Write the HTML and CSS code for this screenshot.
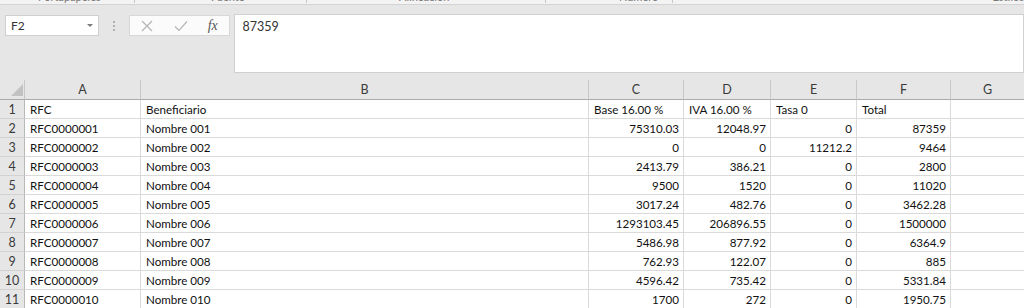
FILE: index.html
```html
<!DOCTYPE html>
<html lang="es">
<head>
<meta charset="utf-8">
<title>Hoja</title>
<link rel="stylesheet" href="styles.css">
</head>
<body>
<div class="ribbon">
  <div class="ribbon-labels">
    <span class="rl rl-1">Portapapeles</span><span class="sep"></span>
    <span class="rl rl-2">Fuente</span><span class="sep"></span>
    <span class="rl rl-3">Alineación</span><span class="sep"></span>
    <span class="rl rl-4">Número</span><span class="sep"></span>
    <span class="rl rl-5">Estilos</span>
  </div>
</div>
<div class="fbar">
  <div class="namebox"><span>F2</span><span class="caret"></span></div>
  <div class="grip"><i></i><i></i><i></i></div>
  <div class="fbtns">
    <svg class="ico" width="12" height="12" viewBox="0 0 12 12"><path d="M1 1L11 11M11 1L1 11" stroke="#b4b4b4" stroke-width="1.2" fill="none"/></svg>
    <svg class="ico" width="14" height="12" viewBox="0 0 14 12"><path d="M1 6.5L5 10.5L13 1.5" stroke="#b4b4b4" stroke-width="1.2" fill="none"/></svg>
    <span class="fx">fx</span>
  </div>
  <div class="finput">87359</div>
</div>
<div class="sheet">
  <div class="corner"><span class="tri"></span></div>
  <div class="ch">A</div><div class="ch">B</div><div class="ch">C</div><div class="ch">D</div><div class="ch">E</div><div class="ch">F</div><div class="ch">G</div>

  <div class="rh">1</div><div class="c">RFC</div><div class="c">Beneficiario</div><div class="c">Base 16.00 %</div><div class="c">IVA 16.00 %</div><div class="c">Tasa 0</div><div class="c">Total</div><div class="c"></div>
  <div class="rh">2</div><div class="c">RFC0000001</div><div class="c">Nombre 001</div><div class="c n">75310.03</div><div class="c n">12048.97</div><div class="c n">0</div><div class="c n">87359</div><div class="c"></div>
  <div class="rh">3</div><div class="c">RFC0000002</div><div class="c">Nombre 002</div><div class="c n">0</div><div class="c n">0</div><div class="c n">11212.2</div><div class="c n">9464</div><div class="c"></div>
  <div class="rh">4</div><div class="c">RFC0000003</div><div class="c">Nombre 003</div><div class="c n">2413.79</div><div class="c n">386.21</div><div class="c n">0</div><div class="c n">2800</div><div class="c"></div>
  <div class="rh">5</div><div class="c">RFC0000004</div><div class="c">Nombre 004</div><div class="c n">9500</div><div class="c n">1520</div><div class="c n">0</div><div class="c n">11020</div><div class="c"></div>
  <div class="rh">6</div><div class="c">RFC0000005</div><div class="c">Nombre 005</div><div class="c n">3017.24</div><div class="c n">482.76</div><div class="c n">0</div><div class="c n">3462.28</div><div class="c"></div>
  <div class="rh">7</div><div class="c">RFC0000006</div><div class="c">Nombre 006</div><div class="c n">1293103.45</div><div class="c n">206896.55</div><div class="c n">0</div><div class="c n">1500000</div><div class="c"></div>
  <div class="rh">8</div><div class="c">RFC0000007</div><div class="c">Nombre 007</div><div class="c n">5486.98</div><div class="c n">877.92</div><div class="c n">0</div><div class="c n">6364.9</div><div class="c"></div>
  <div class="rh">9</div><div class="c">RFC0000008</div><div class="c">Nombre 008</div><div class="c n">762.93</div><div class="c n">122.07</div><div class="c n">0</div><div class="c n">885</div><div class="c"></div>
  <div class="rh">10</div><div class="c">RFC0000009</div><div class="c">Nombre 009</div><div class="c n">4596.42</div><div class="c n">735.42</div><div class="c n">0</div><div class="c n">5331.84</div><div class="c"></div>
  <div class="rh">11</div><div class="c">RFC0000010</div><div class="c">Nombre 010</div><div class="c n">1700</div><div class="c n">272</div><div class="c n">0</div><div class="c n">1950.75</div><div class="c"></div>
</div>
</body>
</html>
```

FILE: styles.css
```css
* { box-sizing: border-box; }
html, body { margin: 0; padding: 0; }
body {
  width: 1024px;
  height: 308px;
  overflow: hidden;
  background: #e6e6e6;
  font-family: Lato, "Open Sans", sans-serif;
  color: #222;
}

/* ribbon remnant */
.ribbon {
  height: 5px;
  background: #f3f3f3;
  border-bottom: 1px solid #d3d3d3;
  overflow: hidden;
}
.ribbon-labels {
  display: flex;
  align-items: flex-start;
  margin-top: -9px;
  font-size: 11px;
  line-height: 12px;
  color: #777;
  white-space: nowrap;
}
.rl { display: block; }
.rl-1 { margin-left: 38px; width: 102px; }
.rl-2 { margin-left: 76px; width: 101px; }
.rl-3 { margin-left: 92px; width: 155px; }
.rl-4 { margin-left: 73px; width: 56px; }
.rl-5 { margin-left: 320px; }
.sep { display: block; width: 1px; height: 12px; background: #c8c8c8; }

/* formula bar */
.fbar {
  height: 75px;
  display: flex;
  align-items: flex-start;
  padding-top: 9px;
  padding-left: 5px;
  overflow: hidden;
}
.namebox {
  margin-top: 1px;
  width: 95px;
  height: 21px;
  background: #fff;
  border: 1px solid #d0d0d0;
  display: flex;
  align-items: center;
  justify-content: space-between;
  padding: 0 5px 0 5px;
  font-size: 12px;
  color: #333;
}
.caret {
  width: 0; height: 0;
  border-left: 3px solid transparent;
  border-right: 3px solid transparent;
  border-top: 3px solid #7a7a7a;
}
.grip {
  width: 30px;
  height: 21px;
  margin-top: 1px;
  display: flex;
  flex-direction: column;
  align-items: center;
  justify-content: center;
  gap: 2px;
}
.grip i { display: block; width: 2px; height: 2px; background: #b0b0b0; }
.fbtns {
  margin-top: 1px;
  width: 102px;
  height: 21px;
  background: #fbfbfb;
  border: 1px solid #d8d8d8;
  display: flex;
  align-items: center;
  padding-left: 11px;
  gap: 20px;
}
.fbtns .ico:nth-child(2) { margin-left: 1px; }
.fx {
  font-family: "Liberation Serif", serif;
  font-style: italic;
  font-size: 14px;
  color: #555;
  margin-left: 0;
}
.finput {
  margin-left: 4px;
  width: 800px;
  height: 59px;
  background: #fff;
  border: 1px solid #d0d0d0;
  padding: 5px 0 0 8px;
  font-size: 12.5px;
  line-height: 14px;
  color: #333;
}

/* sheet grid */
.sheet {
  display: grid;
  grid-template-columns: 25px 116px 448px 95px 87px 86px 94px 74px;
  grid-template-rows: 20px;
  grid-auto-rows: 19px;
  width: 1025px;
  font-size: 11.6px;
}
.corner {
  background: #e6e6e6;
  border-right: 1px solid #c6c6c6;
  border-bottom: 1px solid #ababab;
  display: flex;
  align-items: flex-end;
  justify-content: flex-end;
  padding: 0 1px 3px 0;
}
.tri {
  width: 0; height: 0;
  border-left: 12px solid transparent;
  border-bottom: 12px solid #c2c2c2;
}
.ch {
  background: #e6e6e6;
  border-right: 1px solid #c8c8c8;
  border-bottom: 1px solid #ababab;
  display: flex;
  align-items: flex-end;
  justify-content: center;
  padding-bottom: 2px;
  color: #3a3a3a;
  font-size: 12.5px;
  line-height: 14px;
}
.rh {
  background: #e6e6e6;
  border-right: 1px solid #b8b8b8;
  border-bottom: 1px solid #d2d2d2;
  display: flex;
  align-items: center;
  justify-content: center;
  color: #3a3a3a;
  font-size: 12.5px;
}
.c {
  background: #fff;
  border-right: 1px solid #dadada;
  border-bottom: 1px solid #dadada;
  display: flex;
  align-items: center;
  padding: 0 4px 0 5px;
  white-space: nowrap;
  overflow: hidden;
  color: #111;
}
.c.n { justify-content: flex-end; }
```
